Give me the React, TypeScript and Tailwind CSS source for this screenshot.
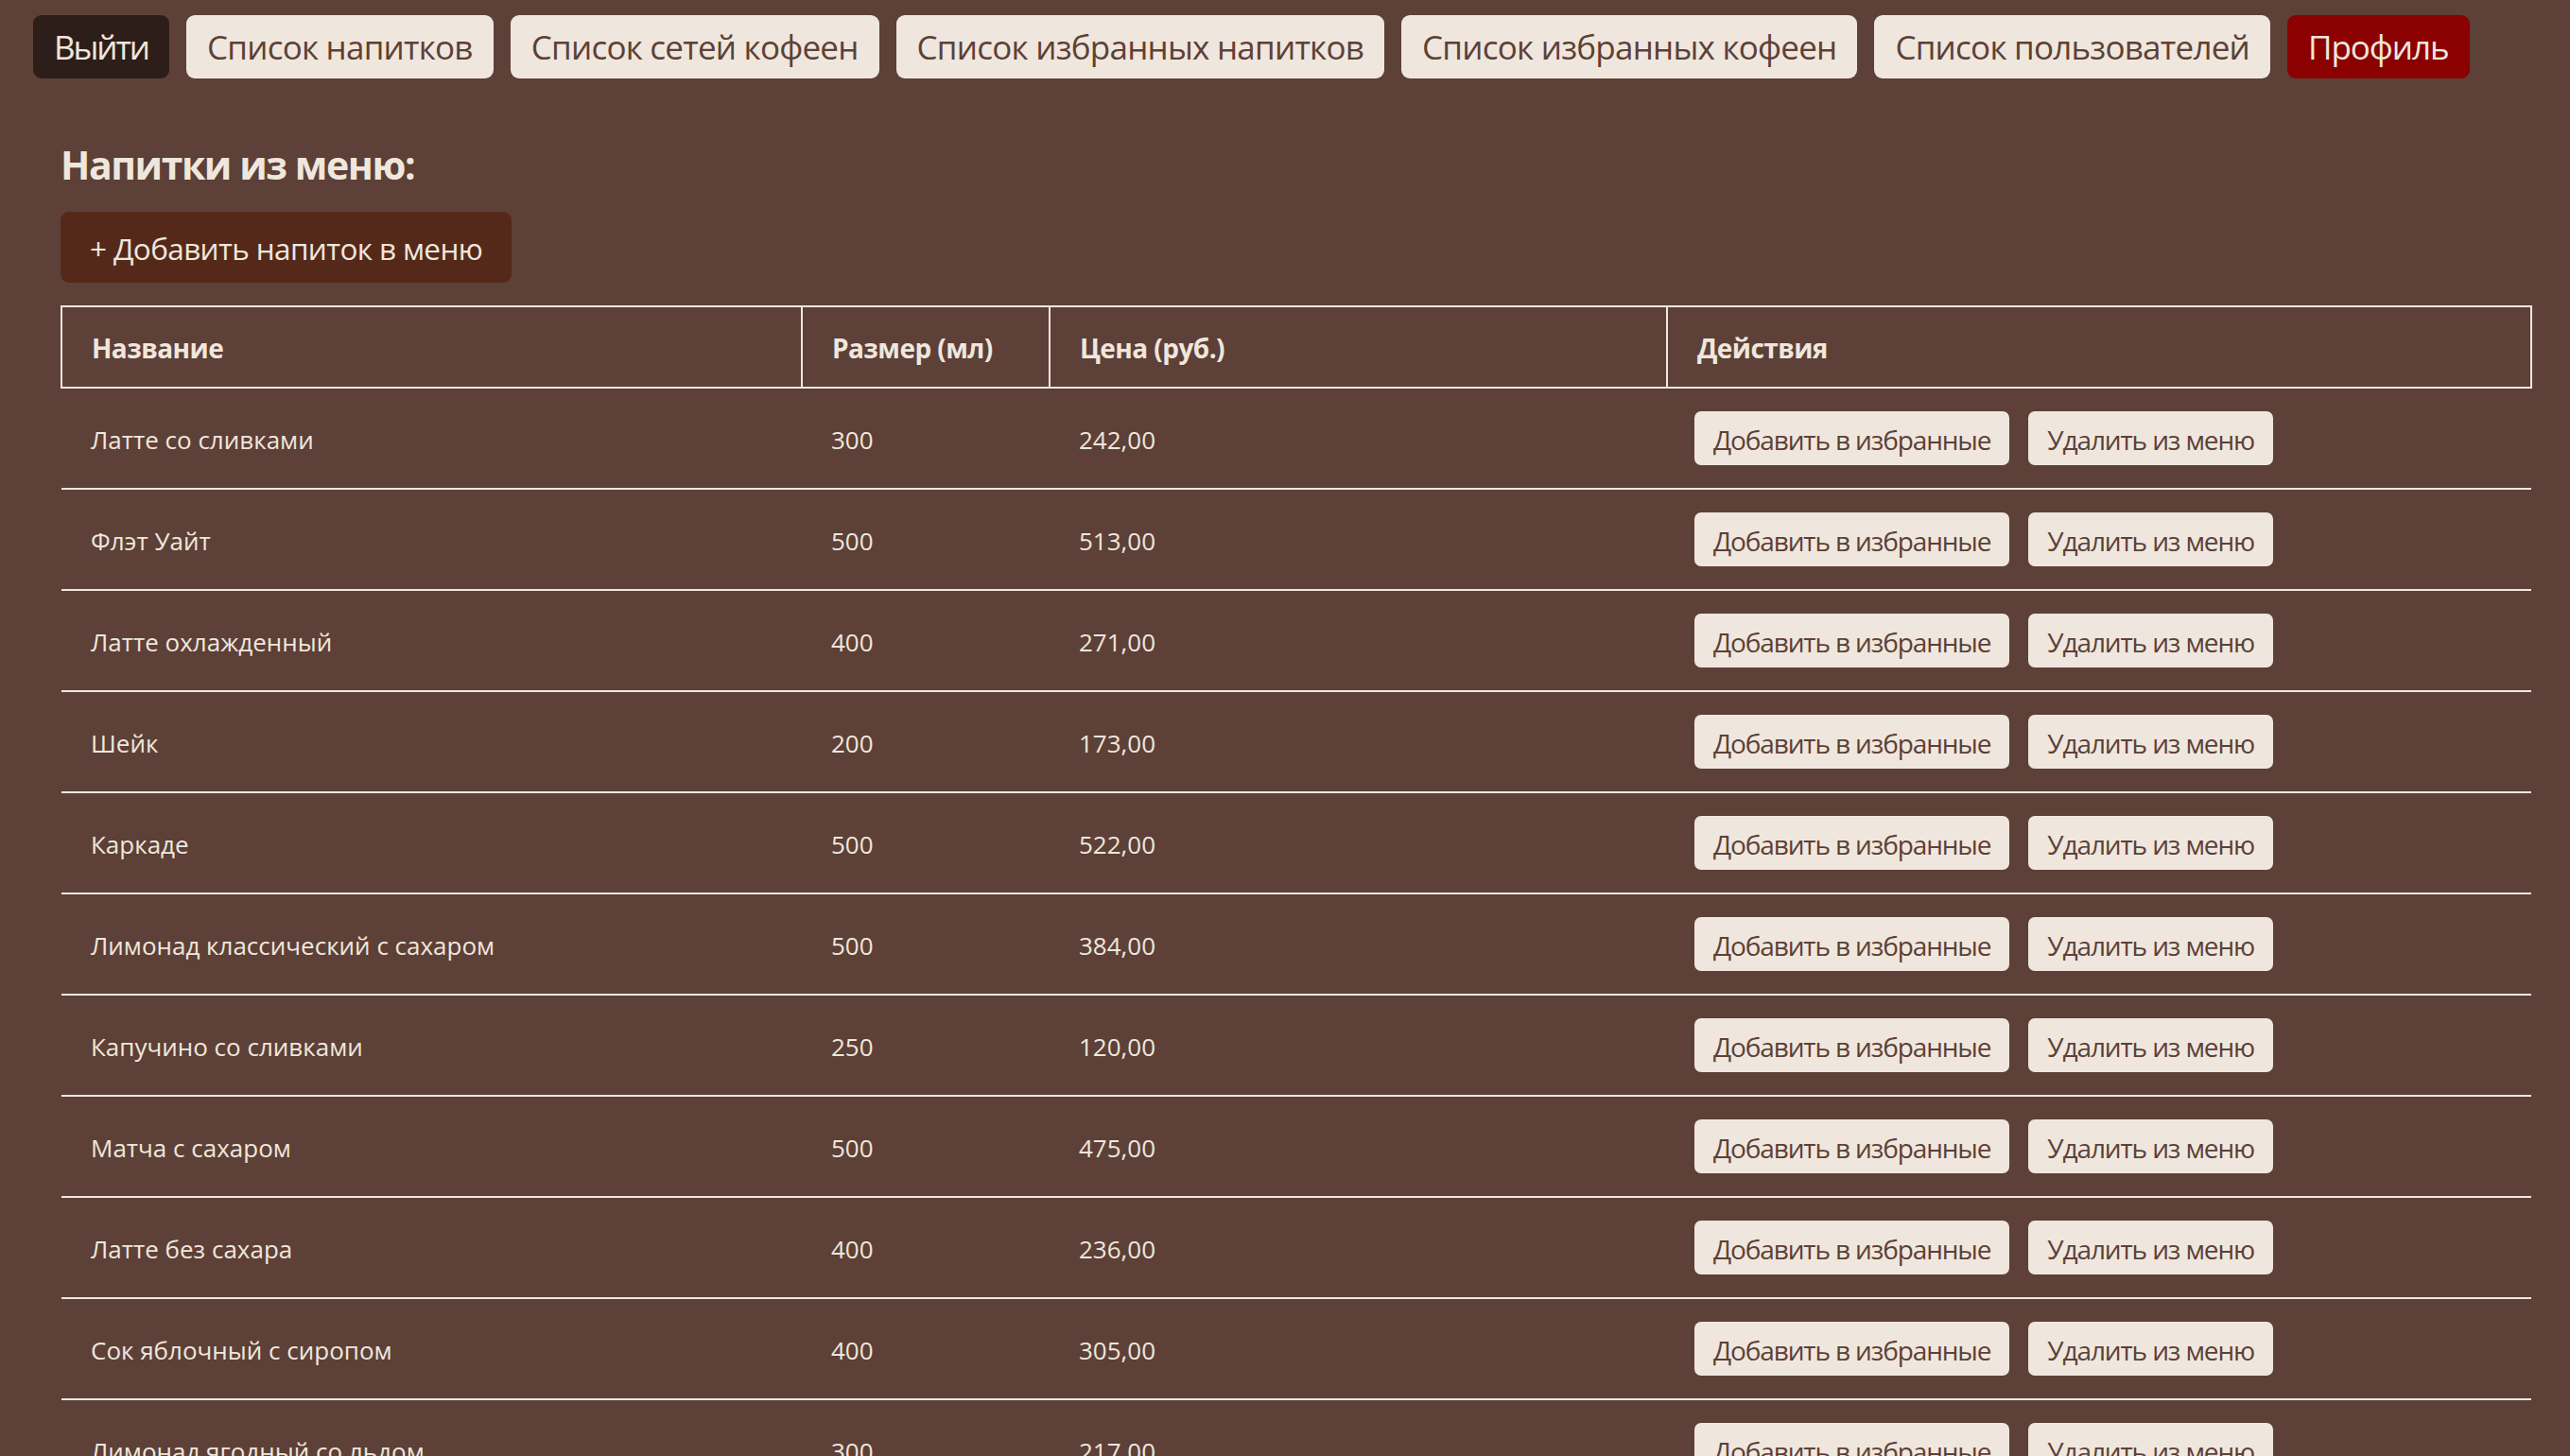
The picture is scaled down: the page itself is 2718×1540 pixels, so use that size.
import React from "react";

const rows: [string, string, string][] = [
  ["Латте со сливками", "300", "242,00"],
  ["Флэт Уайт", "500", "513,00"],
  ["Латте охлажденный", "400", "271,00"],
  ["Шейк", "200", "173,00"],
  ["Каркаде", "500", "522,00"],
  ["Лимонад классический с сахаром", "500", "384,00"],
  ["Капучино со сливками", "250", "120,00"],
  ["Матча с сахаром", "500", "475,00"],
  ["Латте без сахара", "400", "236,00"],
  ["Сок яблочный с сиропом", "400", "305,00"],
  ["Лимонад ягодный со льдом", "300", "217,00"],
  ["Американо", "250", "150,00"],
];

const navItems = [
  "Список напитков",
  "Список сетей кофеен",
  "Список избранных напитков",
  "Список избранных кофеен",
  "Список пользователей",
];

export default function App() {
  return (
    <div className="min-h-screen bg-[#5D4037] font-['Open_Sans','Noto_Sans',sans-serif] text-[#EFE7DD]">
      <nav className="flex gap-[18px] pl-[35px] pt-[16px]">
        <button className="h-[67px] rounded-[9px] bg-[#2D1E1A] px-[22px] pt-[2px] text-[35px] tracking-[-0.06em] text-[#EFE7DD]">
          Выйти
        </button>
        {navItems.map((t) => (
          <button
            key={t}
            className="h-[67px] rounded-[9px] bg-[#EFE7DD] px-[22px] pt-[2px] text-[35px] tracking-[-0.022em] text-[#5D4037]"
          >
            {t}
          </button>
        ))}
        <button className="h-[67px] rounded-[9px] bg-[#8B0000] px-[22px] pt-[2px] text-[35px] tracking-[-0.03em] text-[#EFE7DD]">
          Профиль
        </button>
      </nav>
      <main className="pl-[64px] pt-[63px]">
        <h2 className="text-[41px] font-bold leading-[56px] tracking-[-0.035em]">Напитки из меню:</h2>
        <button className="mt-[22px] h-[75px] rounded-[9px] bg-[#55291A] px-[31px] pt-[2px] text-[31.5px] tracking-[-0.02em] text-[#EFE7DD]">
          + Добавить напиток в меню
        </button>
        <table className="mt-[24px] w-[2612px] table-fixed border-collapse">
          <colgroup>
            <col className="w-[783px]" />
            <col className="w-[262px]" />
            <col className="w-[653px]" />
            <col className="w-[914px]" />
          </colgroup>
          <thead>
            <tr className="h-[86px]">
              {["Название", "Размер (мл)", "Цена (руб.)", "Действия"].map((h) => (
                <th
                  key={h}
                  className="border-2 border-[#EFE7DD] pl-[31px] pt-[2px] text-left align-middle text-[28px] font-bold tracking-[-0.02em]"
                >
                  {h}
                </th>
              ))}
            </tr>
          </thead>
          <tbody>
            {rows.map(([name, size, price]) => (
              <tr key={name} className="h-[107px]">
                <td className="border-b-2 border-[#EFE7DD] pl-[31px] pt-[4px] align-middle text-[26px]">{name}</td>
                <td className="border-b-2 border-[#EFE7DD] pl-[31px] pt-[4px] align-middle text-[26px]">{size}</td>
                <td className="border-b-2 border-[#EFE7DD] pl-[31px] pt-[4px] align-middle text-[26px]">{price}</td>
                <td className="border-b-2 border-[#EFE7DD] pl-[29px] align-middle">
                  <div className="flex gap-[20px]">
                    <button className="h-[57px] rounded-[7px] bg-[#EFE7DD] px-[20px] pt-[2px] text-[28px] tracking-[-0.04em] text-[#5D4037]">
                      Добавить в избранные
                    </button>
                    <button className="h-[57px] rounded-[7px] bg-[#EFE7DD] px-[20px] pt-[2px] text-[28px] tracking-[-0.04em] text-[#5D4037]">
                      Удалить из меню
                    </button>
                  </div>
                </td>
              </tr>
            ))}
          </tbody>
        </table>
      </main>
    </div>
  );
}
